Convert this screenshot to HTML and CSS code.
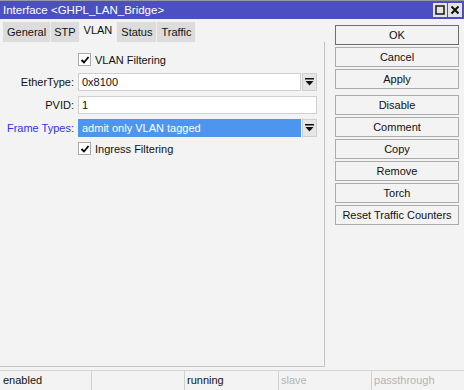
FILE: index.html
```html
<!DOCTYPE html>
<html>
  <head>
    <title>Interface</title>
    <meta charset="UTF-8" />
    <link rel="stylesheet" href="styles.css">
  </head>
  <body>
    <div class="window">
      <div class="titlebar">
        <span class="title">Interface &lt;GHPL_LAN_Bridge&gt;</span>
        <div class="winbtns">
          <span class="winbtn"><svg width="14" height="14" viewBox="0 0 14 14"><rect x="3" y="3" width="8" height="8" fill="none" stroke="#222" stroke-width="1.6"/></svg></span>
          <span class="winbtn"><svg width="14" height="14" viewBox="0 0 14 14"><path d="M3.5 3.5 L10.5 10.5 M10.5 3.5 L3.5 10.5" stroke="#111" stroke-width="2"/></svg></span>
        </div>
      </div>

      <div class="body">
        <div class="main">
          <div class="tabs">
            <span class="tab">General</span>
            <span class="tab">STP</span>
            <span class="tab active">VLAN</span>
            <span class="tab">Status</span>
            <span class="tab">Traffic</span>
          </div>
          <div class="panel">
            <div class="form">
              <span></span>
              <label class="check"><span class="box"><svg width="10" height="10" viewBox="0 0 10 10"><path d="M1.5 5 L4 7.5 L8.5 2" fill="none" stroke="#000" stroke-width="1.8"/></svg></span>VLAN Filtering</label>

              <span class="lbl">EtherType:</span>
              <div class="field">
                <span class="input">0x8100</span>
                <span class="drop"><svg width="9" height="8" viewBox="0 0 9 8"><rect x="0" y="0" width="9" height="1.5" fill="#111"/><path d="M0.5 3 H8.5 L4.5 7.5 Z" fill="#111"/></svg></span>
              </div>

              <span class="lbl">PVID:</span>
              <div class="field">
                <span class="input">1</span>
              </div>

              <span class="lbl blue">Frame Types:</span>
              <div class="field">
                <span class="input selected">admit only VLAN tagged</span>
                <span class="drop"><svg width="9" height="8" viewBox="0 0 9 8"><rect x="0" y="0" width="9" height="1.5" fill="#111"/><path d="M0.5 3 H8.5 L4.5 7.5 Z" fill="#111"/></svg></span>
              </div>

              <span></span>
              <label class="check last"><span class="box"><svg width="10" height="10" viewBox="0 0 10 10"><path d="M1.5 5 L4 7.5 L8.5 2" fill="none" stroke="#000" stroke-width="1.8"/></svg></span>Ingress Filtering</label>
            </div>
          </div>
        </div>

        <div class="actions">
          <button class="btn default">OK</button>
          <button class="btn">Cancel</button>
          <button class="btn">Apply</button>
          <div class="spacer"></div>
          <button class="btn">Disable</button>
          <button class="btn">Comment</button>
          <button class="btn">Copy</button>
          <button class="btn">Remove</button>
          <button class="btn">Torch</button>
          <button class="btn">Reset Traffic Counters</button>
        </div>
      </div>

      <div class="statusbar">
        <span class="cell">enabled</span>
        <span class="cell"></span>
        <span class="cell">running</span>
        <span class="cell dim">slave</span>
        <span class="cell dim">passthrough</span>
      </div>
    </div>
  </body>
</html>
```

FILE: styles.css
```css
html,
body {
  margin: 0;
  padding: 0;
}
body {
  font-family: "Liberation Sans", Arial, sans-serif;
  font-size: 11px;
  color: #111;
  background: #f3f3f3;
}

.window {
  width: 464px;
  height: 390px;
  display: flex;
  flex-direction: column;
  background: #f3f3f3;
}

.titlebar {
  height: 18px;
  border-top: 1px solid #9a9a9a;
  background: #4b4fc1;
  display: flex;
  align-items: center;
  justify-content: space-between;
  padding: 0 2px 0 3px;
}
.title {
  color: #fff;
  font-size: 11.5px;
}
.winbtns {
  display: flex;
  gap: 1px;
}
.winbtn {
  width: 14px;
  height: 14px;
  background: #e4e4e4;
  display: flex;
}

.body {
  flex: 1;
  display: flex;
}

.main {
  width: 325px;
  display: flex;
  flex-direction: column;
  padding-top: 3px;
}
.tabs {
  display: flex;
  align-items: flex-end;
  height: 20px;
  padding-left: 3px;
}
.tab {
  height: 20px;
  line-height: 21px;
  padding: 0 4px;
  background: #dcdcdc;
  border-right: 1px solid #f0f0f0;
}
.tab:nth-child(2) {
  padding: 0 3px;
}
.tab.active {
  height: 22px;
  line-height: 20px;
  background: #f3f3f3;
  padding: 0 4px;
}

.panel {
  flex: 1;
  border-right: 1px solid #c4c4c4;
  border-bottom: 1px solid #c4c4c4;
  margin-bottom: 3px;
  padding-top: 11px;
}

.form {
  display: grid;
  grid-template-columns: 74px 239px;
  column-gap: 4px;
  row-gap: 5px;
  align-items: center;
}
.lbl {
  text-align: right;
}
.lbl.blue {
  color: #3030f0;
}
.check {
  display: flex;
  align-items: center;
  gap: 4px;
  height: 13px;
  margin-bottom: 2px;
}
.check.last {
  margin-top: 0;
}
.box {
  width: 11px;
  height: 11px;
  border: 1px solid #a8a8a8;
  background: #fff;
  display: flex;
  align-items: center;
  justify-content: center;
}
.field {
  display: flex;
  height: 18px;
  gap: 1px;
}
.input {
  flex: 1;
  background: #fff;
  border: 1px solid #d0d0d0;
  line-height: 16px;
  padding-left: 3px;
}
.input.selected {
  background: #4d95ef;
  border-color: #4d95ef;
  color: #fff;
}
.drop {
  width: 13px;
  border: 1px solid #cfcfcf;
  background: #e6e6e6;
  display: flex;
  align-items: center;
  justify-content: center;
}

.actions {
  display: flex;
  flex-direction: column;
  gap: 2px;
  padding: 6px 0 0 10px;
}
.btn {
  width: 124px;
  height: 20px;
  margin: 0;
  padding: 0;
  font-family: inherit;
  font-size: 11px;
  font-weight: normal;
  color: #111;
  background: #f3f3f3;
  border: 1px solid #acacac;
}
.btn.default {
  border-color: #6e6e6e;
}
.spacer {
  height: 2px;
}

.statusbar {
  height: 19px;
  display: flex;
  border-top: 1px solid #d4d4d4;
}
.cell {
  width: 91px;
  border-left: 1px solid #d0d0d0;
  line-height: 19px;
  padding-left: 2px;
}
.cell:first-child {
  border-left: none;
  width: 89px;
  padding-left: 3px;
}
.cell:nth-child(3) {
  width: 90px;
  margin-right: 2px;
}
.cell.dim {
  color: #b4b4b4;
}
```
